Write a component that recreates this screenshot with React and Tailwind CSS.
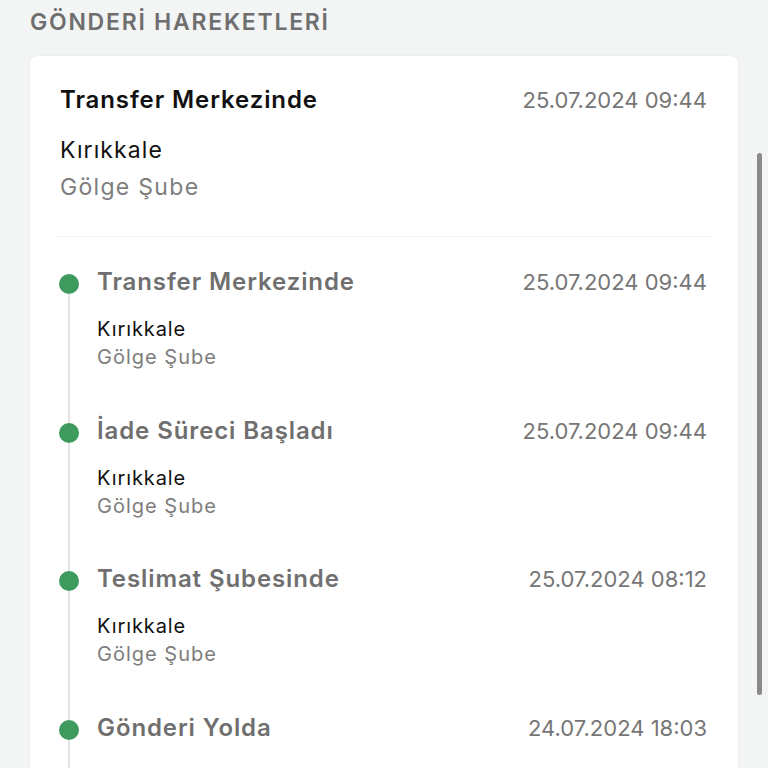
import React from "react";

const events = [
  { title: "Transfer Merkezinde", date: "25.07.2024 09:44", city: "Kırıkkale", branch: "Gölge Şube" },
  { title: "İade Süreci Başladı", date: "25.07.2024 09:44", city: "Kırıkkale", branch: "Gölge Şube" },
  { title: "Teslimat Şubesinde", date: "25.07.2024 08:12", city: "Kırıkkale", branch: "Gölge Şube" },
  { title: "Gönderi Yolda", date: "24.07.2024 18:03" },
];

const App = () => {
  return (
    <div
      className="relative h-[768px] overflow-hidden bg-[#f3f4f4]"
      style={{ fontFamily: "Inter, 'Noto Sans', sans-serif" }}
    >
      {/* Header */}
      <h2 className="px-[30px] pt-[6px] h-[56px] text-[23px] leading-[32px] font-semibold tracking-[1.75px] text-[#6e6e6e]">
        GÖNDERİ HAREKETLERİ
      </h2>

      <div className="mx-[30px] bg-white rounded-lg shadow-[0_0_3px_rgba(0,0,0,0.06)] pl-[30px] pr-[31px] pt-[28px] pb-10">
        {/* Latest status */}
        <div className="flex justify-between items-center">
          <span className="text-[24px] leading-[32px] font-semibold tracking-[0.9px] text-[#111]">Transfer Merkezinde</span>
          <span className="text-[22px] leading-[32px] text-[#767676]">25.07.2024 09:44</span>
        </div>
        <div className="mt-[19px] text-[23px] leading-[30px] tracking-[1.1px] text-[#111]">Kırıkkale</div>
        <div className="mt-[7px] text-[23px] leading-[30px] tracking-[1.3px] text-[#7d7d7d]">Gölge Şube</div>

        <div className="mt-[34px] -ml-[3px] -mr-[3px] border-t border-[#f1f1f1]"></div>

        {/* Timeline */}
        <div className="mt-[21px]">
          {events.map((ev, i) => (
            <div key={i} className="flex items-stretch">
              <div className="w-5 -ml-[1px] flex flex-col items-center shrink-0">
                <div className={`w-[2px] h-[16px] ${i === 0 ? "bg-transparent" : "bg-[#e3e3e3]"}`}></div>
                <div className="w-5 h-5 rounded-full bg-[#3e9a5d]"></div>
                <div className="w-[2px] flex-1 bg-[#e3e3e3]"></div>
              </div>
              <div className="ml-[18px] flex-1 pt-[8px] pb-[36.5px]">
                <div className="flex justify-between items-center">
                  <span className="text-[24px] leading-[32px] font-semibold tracking-[0.9px] text-[#6f6f6f]">{ev.title}</span>
                  <span className="text-[22px] leading-[32px] text-[#767676]">{ev.date}</span>
                </div>
                {ev.city ? (
                  <>
                    <div className="mt-[18px] text-[20px] leading-[26px] tracking-[0.9px] text-[#111]">{ev.city}</div>
                    <div className="mt-[2px] text-[20px] leading-[26px] tracking-[1px] text-[#7d7d7d]">{ev.branch}</div>
                  </>
                ) : (
                  <div className="h-[72px]"></div>
                )}
              </div>
            </div>
          ))}
        </div>
      </div>

      {/* Scroll indicator */}
      <div className="absolute left-[757px] top-[153px] w-[5px] h-[542px] rounded-full bg-[#8a8a8a]"></div>
    </div>
  );
};

export default App;
